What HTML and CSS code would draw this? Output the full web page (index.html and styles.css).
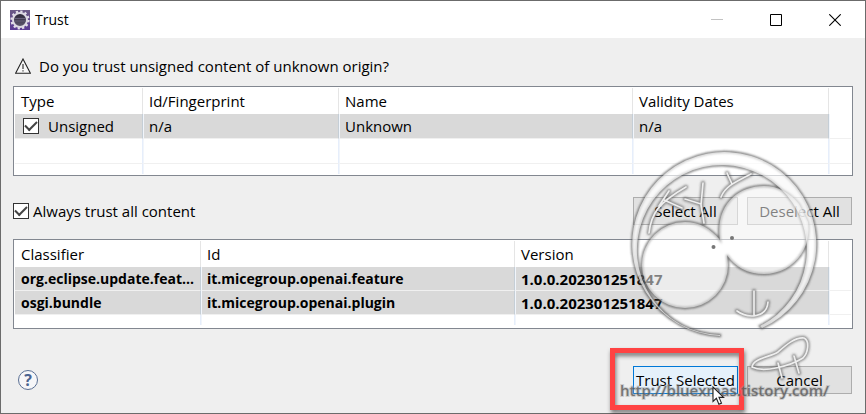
FILE: index.html
```
<!DOCTYPE html>
<html lang="en">
<head>
<meta charset="utf-8">
<title>Trust</title>
<link rel="stylesheet" href="styles.css">
</head>
<body>
<div class="window">
  <header class="titlebar">
    <svg class="app-icon" viewBox="0 0 20 20" aria-hidden="true">
      <defs><linearGradient id="g" x1="0" y1="0" x2="0" y2="1"><stop offset="0" stop-color="#6b5a86"/><stop offset="1" stop-color="#5b3a94"/></linearGradient>
      <linearGradient id="h" x1="0" y1="0" x2="0" y2="1"><stop offset="0" stop-color="#2a2436"/><stop offset="1" stop-color="#605a70"/></linearGradient></defs>
      <rect width="20" height="20" fill="url(#g)"/>
      <circle cx="10" cy="10" r="8.4" fill="none" stroke="#e4e0ea" stroke-width="2.4" stroke-dasharray="2.2 2.2"/>
      <circle cx="10" cy="10" r="7" fill="url(#h)" stroke="#dcd8e2" stroke-width="2"/>
      <path d="M4.5 8.5h11M4.2 11h11.6" stroke="#67607a" stroke-width="1"/>
    </svg>
    <h1>Trust</h1>
    <div class="controls">
      <button type="button" aria-label="Minimize" disabled><svg viewBox="0 0 12 12"><path d="M0 5.5h12" stroke="#c2c2c2"/></svg></button>
      <button type="button" aria-label="Maximize"><svg viewBox="0 0 12 12"><path d="M.5.5h11v11H.5z" fill="none" stroke="#000"/></svg></button>
      <button type="button" aria-label="Close"><svg viewBox="0 0 12 12"><path d="M.3.3l11.4 11.4M11.7.3L.3 11.7" stroke="#000" stroke-width="1.1"/></svg></button>
    </div>
  </header>

  <main>
    <p class="question">
      <svg viewBox="0 0 16 16" aria-hidden="true"><path d="M8 1L15.4 15.2H.6z" fill="#f8f8f8" stroke="#222" stroke-width="1.1"/><path d="M8 6v5M8 12.2v1.4" stroke="#555" stroke-width="1.4"/></svg>
      Do you trust unsigned content of unknown origin?
    </p>

    <div class="grid">
      <table class="signers">
        <colgroup><col class="w1"><col class="w2"><col class="w3"><col class="w4"><col></colgroup>
        <thead><tr><th>Type</th><th>Id/Fingerprint</th><th>Name</th><th>Validity Dates</th><th></th></tr></thead>
        <tbody>
          <tr class="on"><td><label><input type="checkbox" checked>Unsigned</label></td><td>n/a</td><td>Unknown</td><td>n/a</td><td></td></tr>
          <tr><td></td><td></td><td></td><td></td><td></td></tr>
          <tr class="rest"><td></td><td></td><td></td><td></td><td></td></tr>
        </tbody>
      </table>
    </div>

    <div class="options">
      <label><input type="checkbox" checked>Always trust all content</label>
      <div class="buttons">
        <button type="button" class="btn">Select All</button>
        <button type="button" class="btn">Deselect All</button>
      </div>
    </div>

    <div class="grid">
      <table class="units">
        <colgroup><col class="u1"><col class="u2"><col class="u2"><col></colgroup>
        <thead><tr><th>Classifier</th><th>Id</th><th>Version</th><th></th></tr></thead>
        <tbody>
          <tr class="on"><td>org.eclipse.update.feat...</td><td>it.micegroup.openai.feature</td><td class="version">1.0.0.202301251847</td><td></td></tr>
          <tr class="on"><td>osgi.bundle</td><td>it.micegroup.openai.plugin</td><td class="version">1.0.0.202301251847</td><td></td></tr>
          <tr class="rest"><td></td><td></td><td></td><td></td></tr>
        </tbody>
      </table>
    </div>

    <footer>
      <button type="button" class="help" aria-label="Help">?</button>
      <div class="buttons">
        <div class="marked">
          <button type="button" class="btn primary">Trust Selected</button>
          <span class="frame"></span>
          <svg class="cursor" viewBox="0 0 13 20" aria-hidden="true"><path d="M1 1v14.5l3.4-3.2 2.5 5.9 2.6-1.1L7 11.4h4.6z" fill="#fff" stroke="#222" stroke-width="1.1"/></svg>
        </div>
        <button type="button" class="btn">Cancel</button>
      </div>
    </footer>
  </main>

  <svg class="watermark" viewBox="616 144 240 260" aria-hidden="true">
    <defs>
      <filter id="soft" x="-10%" y="-10%" width="120%" height="120%"><feGaussianBlur stdDeviation="1"/></filter>
      <path id="ring" d="M720 336A92 92 0 1 1 762 328L760 326A85 85 0 1 0 720 335Z"/>
      <path id="eyes" d="M720 240C710 228 699 222 685 222A43 43 0 1 0 728 265L727 255C735 267 748 274 764 274C790 274 812 252 808 222L799 204C790 193 778 186 764 186C738 186 715 205 720 240Z"/>
      <g id="lines" fill="none" stroke-linecap="round" stroke-linejoin="round">
        <path d="M649 233C651 214 658 203 686 187M664 200L682 208M669 191L659 206"/>
        <path d="M703 183L701 205L704 223M685 199L701 204"/>
        <path d="M721 197C725 187 733 183 751 174M727 173L732 184"/>
        <path d="M754 291V315M737 311C748 319 767 318 768 302"/>
        <path d="M752 367C753 358 771 357 778 352C786 345 795 337 804 338C810 341 808 353 803 358C790 366 764 373 752 367ZM778 363L782 378M794 356L799 373"/>
      </g>
    </defs>
    <g filter="url(#soft)" stroke="#555" fill="none">
      <use href="#ring" stroke-width="2.4" opacity=".8"/>
      <use href="#eyes" stroke-width="2.4" opacity=".8"/>
      <use href="#lines" stroke-width="4.4" opacity=".6"/>
    </g>
    <use href="#ring" fill="#fff" fill-opacity=".65"/>
    <use href="#eyes" fill="#fff" fill-opacity=".5"/>
    <use href="#lines" stroke="#eee" stroke-width="1.7"/>
    <circle cx="713.5" cy="247" r="2" fill="#777"/><circle cx="732" cy="238" r="2" fill="#777"/>
    <text x="620" y="396">http://bluexmas.tistory.com/</text>
  </svg>
</div>
</body>
</html>
```
FILE: styles.css
```
* { box-sizing: border-box; }

body {
  margin: 0;
  background: #efefef;
  color: #000;
  font: 15px/22px "Open Sans", "Noto Sans", sans-serif;
}

button { font: inherit; color: inherit; padding: 0; }

.window {
  position: relative;
  min-height: 100vh;
  border: 1px solid #6b6b6b;
}

.titlebar {
  display: flex;
  align-items: center;
  height: 37px;
  padding: 0 1px 0 9px;
  background: #fff;
}

.app-icon { width: 20px; height: 20px; }

h1 {
  margin: 0 0 0 5px;
  font-size: 14px;
  font-weight: 400;
}

.controls { display: flex; margin-left: auto; }

.controls button {
  display: grid;
  place-items: center;
  width: 59px;
  height: 36px;
  border: 0;
  background: none;
}

.controls svg { width: 12px; height: 12px; }

main { padding: 0 12px 18px; }

.question {
  display: flex;
  align-items: center;
  gap: 8px;
  margin: 0;
  padding: 17px 0 9px 2px;
}

.question svg { width: 16px; height: 16px; }

.grid {
  height: 90px;
  padding: 1px;
  border: 1px solid #828790;
  background: #fff;
}

table {
  width: 100%;
  table-layout: fixed;
  border-collapse: separate;
  border-spacing: 0;
}

.w1 { width: 128px; }
.w2 { width: 196px; }
.w3 { width: 294px; }
.w4 { width: 196px; }
.u1 { width: 186px; }
.u2 { width: 314px; }

th, td {
  height: 25px;
  padding: 0 0 0 5px;
  border: 0 solid #f0f0f0;
  border-left: 1px solid #f1f5fb;
  border-right: 1px solid #e6eefb;
  line-height: 20px;
  text-align: left;
  white-space: nowrap;
}

th {
  height: 26px;
  border-left-color: transparent;
  border-right-color: #e5e5e5;
  font-weight: 400;
}

td { border-bottom-width: 1px; }
th:first-child, td:first-child { border-left-width: 0; padding-left: 6px; }
th:last-child, td:last-child { border-right-width: 0; }

.on td:not(:last-child) {
  background: #d9d9d9;
  border-right-color: #c5ced6;
}

.units td { height: 24px; font-size: 14px; font-weight: 700; }
.units .version { font-size: 15px; }
.signers .rest td, .units .rest td { height: 10px; border-bottom-width: 0; }

label { display: inline-flex; align-items: center; }
td label { display: flex; }

input[type="checkbox"] {
  appearance: none;
  width: 16px;
  height: 16px;
  margin: 0 4px 0 0;
  border: 1px solid #333;
  background: #fff;
  display: grid;
  place-items: center;
}

input[type="checkbox"]:checked::before {
  content: "";
  width: 10px;
  height: 5px;
  border: solid #444;
  border-width: 0 0 2px 2px;
  transform: translateY(-2px) rotate(-45deg);
}

td input[type="checkbox"] { margin: 0 9px 0 2px; }

.options {
  display: flex;
  align-items: center;
  justify-content: space-between;
  margin: 21px 0 14px;
}

.buttons { display: flex; gap: 9px; margin-right: 1px; }

.btn {
  width: 105px;
  height: 28px;
  border: 1px solid #adadad;
  background: #e1e1e1;
  line-height: 24px;
}

.primary { border-color: #0078d7; background: #e5f1fb; }

footer {
  display: flex;
  align-items: center;
  justify-content: space-between;
  margin-top: 37px;
}

.help {
  width: 20px;
  height: 20px;
  margin-left: 5px;
  border: 1px solid #5a6f94;
  border-radius: 50%;
  background: #f6f6f8;
  color: #4a6390;
  font-size: 16px;
  font-weight: 700;
  line-height: 18px;
}

.marked { position: relative; }

.frame {
  position: absolute;
  inset: -18px -6px -16px -23px;
  border: 5px solid #ff4343;
  filter: drop-shadow(1px 3px 2px rgba(0, 0, 0, .5));
  pointer-events: none;
}

.cursor {
  position: absolute;
  left: 79px;
  top: 20px;
  width: 13px;
  height: 20px;
  z-index: 2;
}

.watermark {
  position: absolute;
  top: 143px;
  right: 9px;
  width: 240px;
  height: 260px;
  pointer-events: none;
}

.watermark text {
  font: 600 15px "Open Sans", sans-serif;
  fill: #555;
  fill-opacity: .75;
  stroke: #999;
  stroke-opacity: .4;
  stroke-width: 2px;
  paint-order: stroke;
}
```
